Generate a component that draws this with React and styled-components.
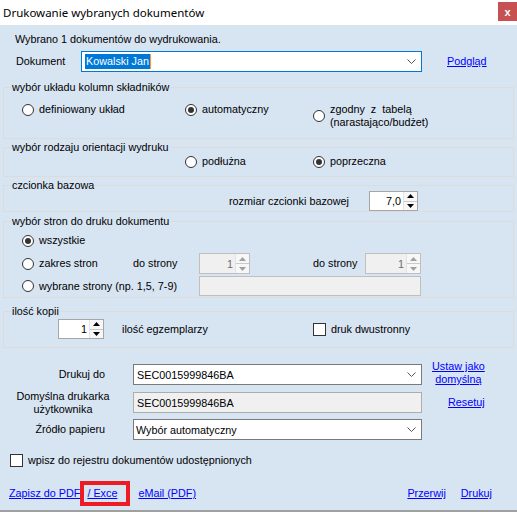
import React from 'react';
import styled, { createGlobalStyle } from 'styled-components';

const GlobalStyle = createGlobalStyle`
  html, body {
    margin: 0;
    padding: 0;
  }
  body {
    font-family: "Liberation Sans", Arial, sans-serif;
    font-size: 10.8px;
    color: #000;
  }
`;

const Window = styled.div`
  width: 517px;
  height: 512px;
  display: flex;
  flex-direction: column;
  overflow: hidden;
  background: #fff;
`;

const TitleBar = styled.div`
  height: 25px;
  flex-shrink: 0;
  display: flex;
  justify-content: space-between;
  align-items: flex-start;
  background: #fff;
`;

const Title = styled.div`
  font-family: "Noto Sans", sans-serif;
  font-size: 11.5px;
  line-height: 25px;
  padding-left: 3px;
`;

const CloseButton = styled.div`
  width: 19px;
  height: 19px;
  margin-top: 2px;
  background: #c75050;
  color: #fff;
  font-weight: bold;
  font-size: 11px;
  display: flex;
  align-items: center;
  justify-content: center;
`;

const Body = styled.div`
  flex: 1;
  background: #d7e4f2;
  padding: 8px 3px 0 3px;
  border-bottom: 2px solid #a0a0a0;
  display: flex;
  flex-direction: column;
`;

const InfoLine = styled.div`
  line-height: 13px;
  padding-left: 12px;
`;

const Row = styled.div`
  display: flex;
  align-items: center;
  height: ${p => p.$h || 21}px;
  margin-top: ${p => p.$mt || 0}px;
  padding-left: ${p => p.$pl || 0}px;
  padding-right: ${p => p.$pr || 0}px;
  flex-shrink: 0;
`;

const Cell = styled.div`
  width: ${p => p.$w}px;
  padding-left: ${p => p.$pl || 0}px;
  flex-shrink: 0;
  line-height: 13px;
  white-space: nowrap;
`;

const FieldLabel = styled.div`
  width: 120px;
  margin-right: 10px;
  flex-shrink: 0;
  box-sizing: border-box;
  line-height: 13px;
  text-align: ${p => (p.$center ? 'center' : 'right')};
  padding-right: ${p => (p.$center ? 0 : 18)}px;
`;

const Combo = styled.div`
  width: ${p => p.$w}px;
  height: 21px;
  box-sizing: border-box;
  border: 1px solid ${p => (p.$focused ? '#0078d7' : '#7a7a7a')};
  background: ${p => (p.$disabled ? '#f0f0f0' : '#fff')};
  display: flex;
  align-items: center;
  justify-content: space-between;
  padding: 0 5px 0 ${p => p.$pl || 3}px;
  flex-shrink: 0;
  ${p => p.$disabled && 'border-color: #adadad;'}
`;

const Selected = styled.span`
  background: #0078d7;
  color: #fff;
  line-height: 15px;
  padding: 0 1px;
  border-right: 1px solid #f29b38;
`;

const Link = styled.span`
  color: #0000ff;
  text-decoration: underline;
  line-height: 13px;
  white-space: nowrap;
  margin-left: ${p => p.$ml || 0}px;
  text-align: center;
  ${p => p.$top && 'align-self: flex-start; margin-top: -4px;'}
`;

const Group = styled.fieldset`
  margin: ${p => p.$mt || 0}px 0 0 0;
  padding: 0;
  border: 1px solid #dcdcdc;
  min-width: 0;
  flex-shrink: 0;
`;

const Legend = styled.legend`
  margin-left: 7px;
  padding: 0 1px;
  line-height: 13px;
  font-size: 10.8px;
`;

const GroupBody = styled.div`
  padding: ${p => p.$pt || 0}px 0 ${p => p.$pb || 0}px 0;
  margin-top: ${p => p.$mt || 0}px;
`;

const OptionGrid = styled.div`
  display: grid;
  grid-template-columns: 163px 128px 1fr;
  align-items: start;
  padding-left: 18px;
  height: ${p => p.$h}px;
`;

const Option = styled.label`
  display: flex;
  align-items: center;
  gap: 5px;
  line-height: 13px;
  white-space: nowrap;
`;

const RadioCircle = styled.span`
  width: 12px;
  height: 12px;
  box-sizing: border-box;
  border-radius: 50%;
  border: 1px solid #333;
  background: #fff;
  display: flex;
  align-items: center;
  justify-content: center;
  flex-shrink: 0;
  &::after {
    content: '';
    width: 6px;
    height: 6px;
    border-radius: 50%;
    background: #333;
    display: ${p => (p.$checked ? 'block' : 'none')};
  }
`;

const CheckBox = styled.span`
  width: 13px;
  height: 13px;
  box-sizing: border-box;
  border: 1px solid #333;
  background: #fff;
  flex-shrink: 0;
`;

const SpinBox = styled.div`
  width: ${p => p.$w}px;
  height: ${p => p.$h || 20}px;
  box-sizing: border-box;
  border: 1px solid ${p => (p.$disabled ? '#bfbfbf' : '#a6a6a6')};
  background: ${p => (p.$disabled ? '#f0f0f0' : '#fff')};
  display: flex;
  flex-shrink: 0;
`;

const SpinValue = styled.div`
  flex: 1;
  display: flex;
  align-items: center;
  justify-content: flex-end;
  padding-right: 2px;
  color: ${p => (p.$disabled ? '#6d6d6d' : '#000')};
`;

const SpinButtons = styled.div`
  width: 13px;
  display: flex;
  flex-direction: column;
  border-left: 1px solid #e3e3e3;
`;

const SpinButton = styled.div`
  flex: 1;
  display: flex;
  align-items: center;
  justify-content: center;
  background: #f7f7f7;
  & + & {
    border-top: 1px solid #c9c9c9;
  }
`;

const TextBox = styled.div`
  width: ${p => p.$w}px;
  height: 20px;
  box-sizing: border-box;
  border: 1px solid #bfbfbf;
  background: #f0f0f0;
  flex-shrink: 0;
`;

const Highlight = styled.span`
  display: inline-flex;
  align-items: center;
  height: 25px;
  box-sizing: border-box;
  border: 4px solid #ed1c24;
  padding: 0 9px 0 3px;
`;

const Spacer = styled.div`
  flex: 1;
`;

const Chevron = () => (
  <svg width="9" height="5" viewBox="0 0 9 5">
    <polyline points="0.5,0.5 4.5,4.5 8.5,0.5" fill="none" stroke="#555" strokeWidth="1" />
  </svg>
);

const Arrow = ({ up, disabled }) => (
  <svg width="7" height="4" viewBox="0 0 7 4">
    <polygon
      points={up ? '3.5,0 7,4 0,4' : '0,0 7,0 3.5,4'}
      fill={disabled ? '#a0a0a0' : '#000'}
    />
  </svg>
);

const Spin = ({ w, h, value, disabled }) => (
  <SpinBox $w={w} $h={h} $disabled={disabled}>
    <SpinValue $disabled={disabled}>{value}</SpinValue>
    <SpinButtons>
      <SpinButton><Arrow up disabled={disabled} /></SpinButton>
      <SpinButton><Arrow disabled={disabled} /></SpinButton>
    </SpinButtons>
  </SpinBox>
);

const Radio = ({ checked, children }) => (
  <Option>
    <RadioCircle $checked={checked} />
    <span>{children}</span>
  </Option>
);

export default function App() {
  return (
    <>
      <GlobalStyle />
      <Window>
        <TitleBar>
          <Title>Drukowanie wybranych dokumentów</Title>
          <CloseButton>x</CloseButton>
        </TitleBar>
        <Body>
          <InfoLine>Wybrano 1 dokumentów do wydrukowania.</InfoLine>
          <Row $mt={5} $pl={13}>
            <Cell $w={65}>Dokument</Cell>
            <Combo $w={341} $focused>
              <Selected>Kowalski Jan</Selected>
              <Chevron />
            </Combo>
            <Link $ml={25}>Podgląd</Link>
          </Row>

          <Group $mt={9}>
            <Legend>wybór układu kolumn składników</Legend>
            <GroupBody $pt={9} $pb={9}>
              <OptionGrid $h={26}>
                <Radio>definiowany układ</Radio>
                <Radio checked>automatyczny</Radio>
                <Radio>
                  {'zgodny\u00a0 z\u00a0 tabelą'}
                  <br />
                  (narastająco/budżet)
                </Radio>
              </OptionGrid>
            </GroupBody>
          </Group>

          <Group $mt={2}>
            <Legend>wybór rodzaju orientacji wydruku</Legend>
            <GroupBody $pt={1} $pb={8}>
              <OptionGrid $h={13}>
                <span />
                <Radio>podłużna</Radio>
                <Radio checked>poprzeczna</Radio>
              </OptionGrid>
            </GroupBody>
          </Group>

          <Group $mt={2}>
            <Legend>czcionka bazowa</Legend>
            <GroupBody $mt={-1}>
              <Row $h={20} $pl={225}>
                <Cell $w={140}>rozmiar czcionki bazowej</Cell>
                <Spin w={49} value="7,0" />
              </Row>
            </GroupBody>
          </Group>

          <Group $mt={3}>
            <Legend>wybór stron do druku dokumentu</Legend>
            <GroupBody $pt={6} $pb={1}>
              <Row $h={13} $pl={18}>
                <Radio checked>wszystkie</Radio>
              </Row>
              <Row $h={21} $mt={6} $pl={18}>
                <Cell $w={111}><Radio>zakres stron</Radio></Cell>
                <Cell $w={66}>do strony</Cell>
                <Spin w={51} h={21} value="1" disabled />
                <Cell $w={63} />
                <Cell $w={52}>do strony</Cell>
                <Spin w={56} h={21} value="1" disabled />
              </Row>
              <Row $h={20} $mt={2} $pl={18}>
                <Cell $w={177}><Radio>wybrane strony (np. 1,5, 7-9)</Radio></Cell>
                <TextBox $w={222} />
              </Row>
            </GroupBody>
          </Group>

          <Group $mt={7}>
            <Legend>ilość kopii</Legend>
            <GroupBody $pt={1} $pb={8}>
              <Row $h={20} $pl={54}>
                <Spin w={46} value="1" />
                <Cell $w={191} $pl={18}>ilość egzemplarzy</Cell>
                <Option>
                  <CheckBox />
                  <span>druk dwustronny</span>
                </Option>
              </Row>
            </GroupBody>
          </Group>

          <Row $mt={16}>
            <FieldLabel>Drukuj do</FieldLabel>
            <Combo $w={289}>
              <span>SEC0015999846BA</span>
              <Chevron />
            </Combo>
            <Link $ml={10} $top>
              Ustaw jako
              <br />
              domyślną
            </Link>
          </Row>

          <Row $mt={7}>
            <FieldLabel $center>
              Domyślna drukarka
              <br />
              użytkownika
            </FieldLabel>
            <Combo $w={289} $disabled>
              <span>SEC0015999846BA</span>
            </Combo>
            <Link $ml={26}>Resetuj</Link>
          </Row>

          <Row $mt={6}>
            <FieldLabel>Źródło papieru</FieldLabel>
            <Combo $w={289} $pl={2}>
              <span>Wybór automatyczny</span>
              <Chevron />
            </Combo>
          </Row>

          <Row $h={13} $mt={14} $pl={7}>
            <Option>
              <CheckBox />
              <span>wpisz do rejestru dokumentów udostępnionych</span>
            </Option>
          </Row>

          <Row $h={25} $mt={14} $pl={6} $pr={22}>
            <Link>Zapisz do PDF</Link>
            <Highlight>
              <Link>/ Exce</Link>
            </Highlight>
            <Link $ml={8}>eMail (PDF)</Link>
            <Spacer />
            <Link>Przerwij</Link>
            <Link $ml={15}>Drukuj</Link>
          </Row>
        </Body>
      </Window>
    </>
  );
}
